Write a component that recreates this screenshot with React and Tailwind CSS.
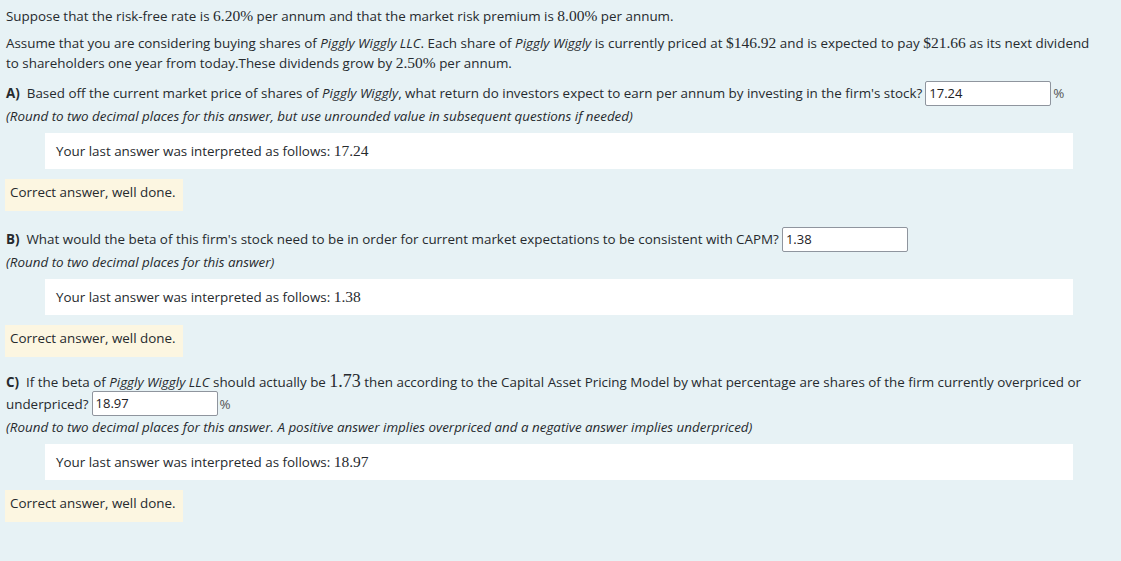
import React from "react";

const M = ({ children, big }) => (
  <span
    className={big ? "text-[18px] leading-[20px]" : "text-[15.5px] leading-none"}
    style={{ fontFamily: '"Liberation Serif", "DejaVu Serif", serif' }}
  >
    {children}
  </span>
);

const Answer = ({ value, className = "" }) => (
  <span
    className={`inline-block h-[25px] w-[126px] border border-[#8f959e] rounded-[2px] bg-white px-[3px] leading-[23px] text-[13px] text-[#1d2125] ${className}`}
  >
    {value}
  </span>
);

const Interpreted = ({ value }) => (
  <div className="ml-[39px] mr-[42px] h-[36px] bg-white pl-[11px] flex items-center">
    <span>
      Your last answer was interpreted as follows: <M>{value}</M>
    </span>
  </div>
);

const Correct = () => (
  <div className="inline-block bg-[#fcf6e1] pl-[5px] pr-[7px] pt-[3px] pb-[9px] leading-[20px] -ml-px">
    Correct answer, well done.
  </div>
);

export default function App() {
  return (
    <div
      className="w-[1121px] h-[561px] bg-[#e7f2f5] text-[#262a2e] text-[13.4px] leading-[20px] pl-[6px] pr-[6px] pt-[6px]"
      style={{ fontFamily: '"Open Sans", "Noto Sans", sans-serif' }}
    >
      <p>
        Suppose that the risk-free rate is <M>6.20%</M> per annum and that the market risk premium is{" "}
        <M>8.00%</M> per annum.
      </p>
      <div className="mt-[7px]">
        <div className="whitespace-nowrap">
          Assume that you are considering buying shares of <i>Piggly Wiggly LLC</i>. Each share of{" "}
          <i>Piggly Wiggly</i> is currently priced at <M>$146.92</M> and is expected to pay <M>$21.66</M> as its
          next dividend
        </div>
        <div className="whitespace-nowrap">
          to shareholders one year from today.These dividends grow by <M>2.50%</M> per annum.
        </div>
      </div>

      {/* A */}
      <div className="mt-[7px] h-[26px] flex items-center whitespace-nowrap">
        <span>
          <b>A)</b>&nbsp; Based off the current market price of shares of <i>Piggly Wiggly</i>, what return do
          investors expect to earn per annum by investing in the firm's stock?
        </span>
        <Answer value="17.24" className="ml-[3px]" />
        <span className="ml-[2px] text-[#555]">%</span>
      </div>
      <p className="italic">
        (Round to two decimal places for this answer, but use unrounded value in subsequent questions if needed)
      </p>
      <div className="mt-[7px]">
        <Interpreted value="17.24" />
      </div>
      <div className="mt-[10px]">
        <Correct />
      </div>

      {/* B */}
      <div className="mt-[15px] h-[26px] flex items-center whitespace-nowrap">
        <span>
          <b>B)</b>&nbsp; What would the beta of this firm's stock need to be in order for current market
          expectations to be consistent with CAPM?
        </span>
        <Answer value="1.38" className="ml-[3px]" />
      </div>
      <p className="italic">(Round to two decimal places for this answer)</p>
      <div className="mt-[7px]">
        <Interpreted value="1.38" />
      </div>
      <div className="mt-[10px]">
        <Correct />
      </div>

      {/* C */}
      <div className="mt-[14px] h-[20px] flex items-center whitespace-nowrap">
        <span>
          <b>C)</b>&nbsp; If the beta of <i>Piggly Wiggly LLC</i> should actually be <M big>1.73</M> then
          according to the Capital Asset Pricing Model by what percentage are shares of the firm currently
          overpriced or
        </span>
      </div>
      <div className="h-[25px] flex items-center whitespace-nowrap">
        <span>underpriced?</span>
        <Answer value="18.97" className="ml-[3px]" />
        <span className="ml-[2px] text-[#555]">%</span>
      </div>
      <p className="italic mt-px">
        (Round to two decimal places for this answer. A positive answer implies overpriced and a negative answer
        implies underpriced)
      </p>
      <div className="mt-[7px]">
        <Interpreted value="18.97" />
      </div>
      <div className="mt-[10px]">
        <Correct />
      </div>
    </div>
  );
}
